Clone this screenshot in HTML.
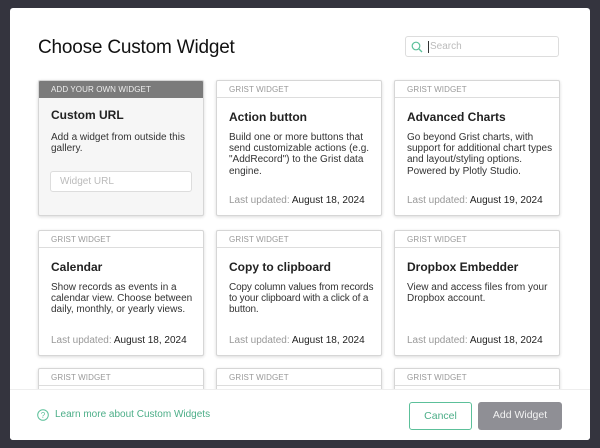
<!DOCTYPE html>
<html><head><style>
*{box-sizing:border-box;margin:0;padding:0}
html,body{width:600px;height:448px;overflow:hidden}
body{background:#34343e;font-family:"Liberation Sans",sans-serif;position:relative}
.modal{position:absolute;left:10px;top:8px;width:580px;height:432px;background:#fff;border-radius:3px;overflow:hidden}
h1{position:absolute;left:28px;top:29px;font-size:19px;font-weight:normal;color:#111;letter-spacing:-0.2px}
.search{position:absolute;left:395px;top:28px;width:154px;height:21px;border:1px solid #ddd;border-radius:3px}
.search span{position:absolute;left:22px;top:4px;font-size:10px;color:#bbb;border-left:1px solid #333;padding-left:1px;line-height:12px}
.card{position:absolute;width:166px;height:136px;border:1px solid #d6d6d6;border-radius:2px;background:#fff;box-shadow:0 1px 3px rgba(0,0,0,.15);overflow:hidden}
.card .hd{height:17px;border-bottom:1px solid #ddd;font-size:8px;color:#999;padding:4px 0 0 12px;letter-spacing:.1px}
.card.own{background:#f6f6f6}
.card.own .hd{background:#7b7b7b;color:#eee;border-bottom:none}
.card .t{position:absolute;left:12px;top:29px;font-size:12px;font-weight:bold;color:#222}
.card .d{position:absolute;left:12px;top:51px;right:4px;font-size:10px;color:#333;line-height:11.2px}
.card .u{position:absolute;left:12px;bottom:9px;font-size:10px;color:#222}
.card .u b{font-weight:normal;color:#999}
.foot{position:absolute;left:0;top:381px;width:580px;height:51px;background:#fff;border-top:1px solid #eee}
.btn{position:absolute;top:12px;height:28px;border-radius:3px;font-size:10.5px;text-align:center;line-height:27px}
</style></head><body>
<div class="modal">
<h1>Choose Custom Widget</h1>
<div class="search"><svg style="position:absolute;left:5px;top:4px" width="12" height="12" viewBox="0 0 12 12"><circle cx="5" cy="5" r="3.8" fill="none" stroke="#5cc09a" stroke-width="1.2"/><path d="M8 8l3 3" stroke="#5cc09a" stroke-width="1.3"/></svg><span>Search</span></div>

<div class="card own" style="left:28px;top:72px"><div class="hd">ADD YOUR OWN WIDGET</div><div class="t" style="top:27px">Custom URL</div><div class="d" style="top:51px">Add a widget from outside this gallery.</div>
<div style="position:absolute;left:11px;top:90px;width:142px;height:21px;border:1px solid #ddd;border-radius:3px;background:#fff;font-size:10px;color:#bbb;padding:4px 9px">Widget URL</div></div>
<div class="card" style="left:206px;top:72px"><div class="hd">GRIST WIDGET</div><div class="t">Action button</div><div class="d">Build one or more buttons that send customizable actions (e.g. "AddRecord") to the Grist data engine.</div><div class="u"><b>Last updated:</b> August 18, 2024</div></div>
<div class="card" style="left:384px;top:72px"><div class="hd">GRIST WIDGET</div><div class="t">Advanced Charts</div><div class="d">Go beyond Grist charts, with support for additional chart types and layout/styling options. Powered by Plotly Studio.</div><div class="u"><b>Last updated:</b> August 19, 2024</div></div>

<div class="card" style="left:28px;top:222px;height:126px"><div class="hd">GRIST WIDGET</div><div class="t">Calendar</div><div class="d">Show records as events in a calendar view. Choose between daily, monthly, or yearly views.</div><div class="u"><b>Last updated:</b> August 18, 2024</div></div>
<div class="card" style="left:206px;top:222px;height:126px"><div class="hd">GRIST WIDGET</div><div class="t">Copy to clipboard</div><div class="d" style="right:0;letter-spacing:-0.15px">Copy column values from records to your clipboard with a click of a button.</div><div class="u"><b>Last updated:</b> August 18, 2024</div></div>
<div class="card" style="left:384px;top:222px;height:126px"><div class="hd">GRIST WIDGET</div><div class="t">Dropbox Embedder</div><div class="d">View and access files from your Dropbox account.</div><div class="u"><b>Last updated:</b> August 18, 2024</div></div>

<div class="card" style="left:28px;top:360px;height:30px"><div class="hd">GRIST WIDGET</div></div>
<div class="card" style="left:206px;top:360px;height:30px"><div class="hd">GRIST WIDGET</div></div>
<div class="card" style="left:384px;top:360px;height:30px"><div class="hd">GRIST WIDGET</div></div>

<div class="foot">
<svg style="position:absolute;left:27px;top:19px" width="12" height="12" viewBox="0 0 12 12"><circle cx="6" cy="6" r="5.3" fill="none" stroke="#5cc09a" stroke-width="1"/><text x="6" y="9" font-size="8" text-anchor="middle" fill="#5cc09a" font-family="Liberation Sans">?</text></svg>
<div style="position:absolute;left:45px;top:19px;font-size:10px;color:#4cae88">Learn more about Custom Widgets</div>
<div class="btn" style="left:399px;width:63px;border:1px solid #5cc09a;color:#4cae88">Cancel</div>
<div class="btn" style="left:468px;width:84px;background:#8f8f95;color:#f2f2f2">Add Widget</div>
</div>
</div>
</body></html>
